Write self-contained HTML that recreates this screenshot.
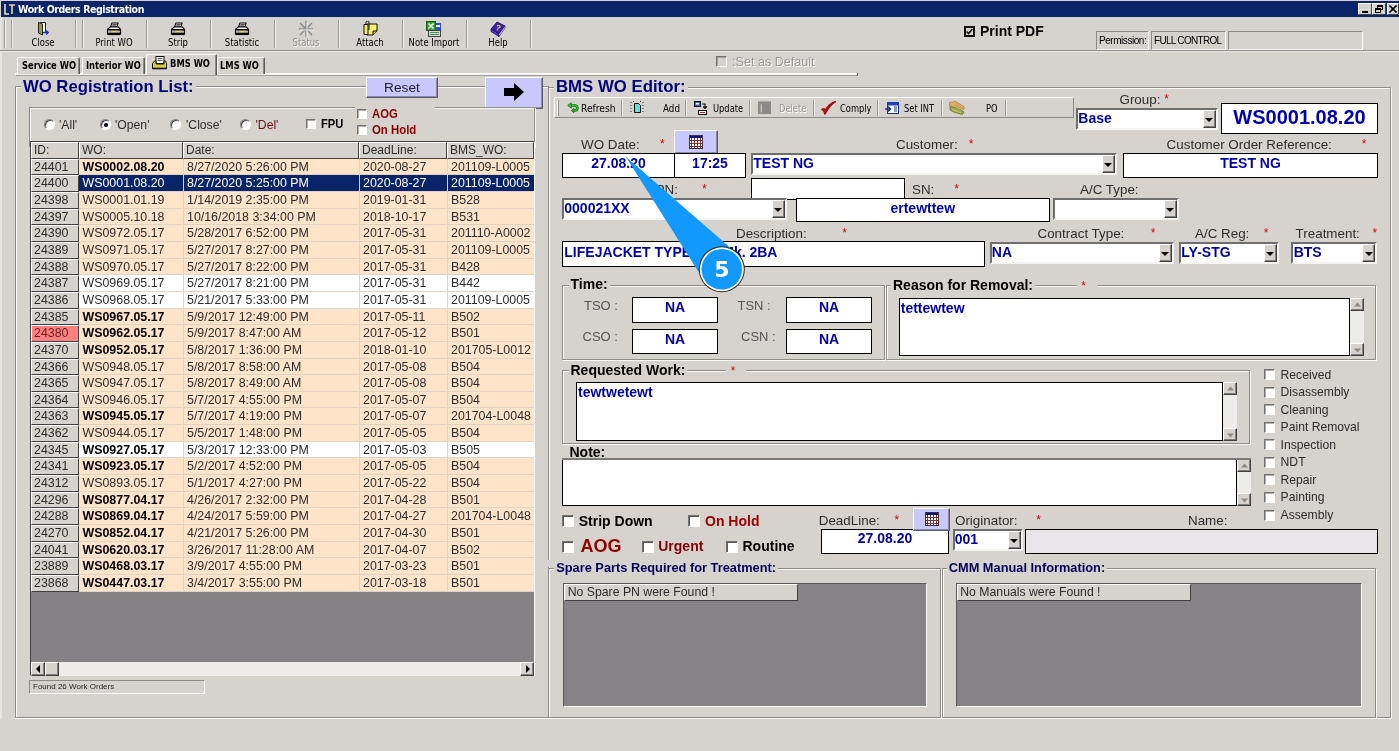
<!DOCTYPE html>
<html lang="en"><head><meta charset="utf-8"><title>Work Orders Registration</title>
<style>

html,body{margin:0;padding:0;}
body{width:1399px;height:751px;overflow:hidden;background:#d6d3ce;font-family:"Liberation Sans",sans-serif;}
#app{position:relative;width:1399px;height:751px;overflow:hidden;will-change:transform;}
#app div,#app span,#app svg{position:absolute;box-sizing:border-box;white-space:nowrap;}
.tah{font-family:"DejaVu Sans Condensed","DejaVu Sans","Liberation Sans",sans-serif;}
.lbl{font-size:13.4px;color:#2e2e2e;line-height:16px;height:16px;}
.star{color:#e00000;font-size:12px;line-height:12px;height:12px;}
.fld{background:#fff;border:1px solid #000;color:#0000a8;font-weight:bold;font-size:14px;line-height:16px;}
.fld.c{text-align:center;}
.cmb{background:#fff;border-top:2px solid #6e6e6e;border-left:2px solid #6e6e6e;border-bottom:2px solid #f4f4f2;border-right:2px solid #f4f4f2;color:#0000a8;font-weight:bold;font-size:14px;line-height:16px;}
.dd{background:#d6d3ce;border-top:1px solid #fff;border-left:1px solid #fff;border-right:1px solid #404040;border-bottom:1px solid #404040;box-shadow:inset -1px -1px 0 #808080;}
.dd i{position:absolute;left:50%;top:50%;margin:-1px 0 0 -4px;width:0;height:0;border-left:4px solid transparent;border-right:4px solid transparent;border-top:4px solid #000;}
.chk{width:11px;height:11px;background:#fff;border-top:1px solid #707070;border-left:1px solid #707070;border-bottom:1px solid #fff;border-right:1px solid #fff;box-shadow:inset 1px 1px 0 #b0aeaa;}
.grp{border:1px solid #8e8c88;box-shadow:1px 1px 0 #fbfaf8, inset 1px 1px 0 #fbfaf8;}
.gl{background:#d6d3ce;font-weight:bold;padding:0 2px;}
.sep{width:2px;border-left:1px solid #9c9a94;border-right:1px solid #f2f0ec;}
.tbl{font-size:11px;color:#000;text-align:center;line-height:13px;}
.lav{background:#c8c8ff;border-top:1px solid #fff;border-left:1px solid #fff;border-right:1px solid #5a5a6a;border-bottom:1px solid #5a5a6a;box-shadow:inset -1px -1px 0 #8a8aa0;}
.g{font-size:12.4px;line-height:16px;color:#2c2c2c;height:16.66px;}
.sb{background:#edecea;}
.sbb{background:#d6d3ce;border-top:1px solid #fff;border-left:1px solid #fff;border-right:1px solid #404040;border-bottom:1px solid #404040;box-shadow:inset -1px -1px 0 #808080;}
.ta{background:#fff;border:1px solid #000;}
.hdr{background:#d6d3ce;border-top:1px solid #fff;border-left:1px solid #fff;border-right:1px solid #404040;border-bottom:1px solid #404040;font-size:12px;line-height:14px;color:#2c2c2c;}

</style></head>
<body>
<div id="app">
<div style="left:1px;top:1px;width:1398px;height:16px;background:#0a246a;"></div>
<svg style="left:3px;top:2px" width="14" height="14" viewBox="0 0 14 14"><path d="M2 2v10h4" stroke="#e8e0c0" stroke-width="1.6" fill="none"/><path d="M6 3h6M9 3v9" stroke="#f0d890" stroke-width="1.6" fill="none"/></svg>
<div class="tah" style="left:18px;top:2px;height:14px;line-height:14px;font-size:10.5px;letter-spacing:-0.42px;font-weight:bold;color:#fff;">Work Orders Registration</div>
<div style="left:1358px;top:3px;width:14px;height:12px;background:#d6d3ce;border-top:1px solid #fff;border-left:1px solid #fff;border-right:1px solid #404040;border-bottom:1px solid #404040;"><div style="left:3px;top:7px;width:6px;height:2px;background:#000"></div></div>
<div style="left:1372px;top:3px;width:14px;height:12px;background:#d6d3ce;border-top:1px solid #fff;border-left:1px solid #fff;border-right:1px solid #404040;border-bottom:1px solid #404040;"><div style="left:4px;top:1px;width:6px;height:5px;border:1px solid #000;border-top:2px solid #000"></div><div style="left:2px;top:4px;width:6px;height:5px;border:1px solid #000;border-top:2px solid #000;background:#d6d3ce"></div></div>
<div style="left:1387px;top:3px;width:12px;height:12px;background:#d6d3ce;border-top:1px solid #fff;border-left:1px solid #fff;border-right:1px solid #404040;border-bottom:1px solid #404040;"><svg style="left:1px;top:1px" width="8" height="8" viewBox="0 0 8 8"><path d="M0.5 0.5L7.5 7.5M7.5 0.5L0.5 7.5" stroke="#000" stroke-width="1.6"/></svg></div>
<div style="left:0;top:17px;width:2px;height:734px;background:#e6e4e0"></div>
<div style="left:0;top:50px;width:1399px;height:1px;background:#8c8a86"></div>
<div style="left:0;top:51px;width:1399px;height:1px;background:#eceae6"></div>
<div class="sep" style="left:4px;top:20px;height:28px"></div>
<div class="sep" style="left:11px;top:20px;height:28px"></div>
<div class="sep" style="left:75px;top:20px;height:28px"></div>
<div class="sep" style="left:82px;top:20px;height:28px"></div>
<div class="sep" style="left:146px;top:20px;height:28px"></div>
<div class="sep" style="left:210px;top:20px;height:28px"></div>
<div class="sep" style="left:274px;top:20px;height:28px"></div>
<div class="sep" style="left:338px;top:20px;height:28px"></div>
<div class="sep" style="left:402px;top:20px;height:28px"></div>
<div class="sep" style="left:466px;top:20px;height:28px"></div>
<div class="sep" style="left:530px;top:20px;height:28px"></div>
<div style="left:35px;top:21px;width:16px;height:16px"><svg width="16" height="16" viewBox="0 0 16 16"><path d="M5.500 1.500h5v10h-5z" fill="#fff" stroke="#222" stroke-width="1"/><path d="M3.500 1.500l4 1.500v11l-4-2z" fill="#98a020" stroke="#222" stroke-width="1"/><path d="M8.500 11.500h4.500m-1.800-2l2 2-2 2" stroke="#2030c0" stroke-width="1.400" fill="none"/></svg></div>
<div class="tah tbl" style="left:11px;top:36px;width:64px;color:#000;transform:scaleX(.855)">Close</div>
<div style="left:106px;top:21px;width:16px;height:16px"><svg width="16" height="16" viewBox="-1 -1.500 16 16"><path d="M3.500 4.500l1.500-4h6l-1 4z" fill="#fff" stroke="#000" stroke-width="1.100"/><path d="M5.600 2h4M5.200 3.300h4" stroke="#333" stroke-width="0.900"/><path d="M0.500 7l2.500-2.500h8.500l2 2.500v4.500h-13z" fill="#fff" stroke="#000" stroke-width="1.200"/><path d="M0.500 7.300h13" stroke="#000" stroke-width="1.600"/><rect x="1" y="8.600" width="12" height="1.600" fill="#a8a8a8"/><rect x="5.500" y="8.400" width="4" height="1.800" fill="#e8e820"/><path d="M0.500 11.400h13" stroke="#000" stroke-width="2.400"/></svg></div>
<div class="tah tbl" style="left:82px;top:36px;width:64px;color:#000;transform:scaleX(.855)">Print WO</div>
<div style="left:170px;top:21px;width:16px;height:16px"><svg width="16" height="16" viewBox="-1 -1.500 16 16"><path d="M3.500 4.500l1.500-4h6l-1 4z" fill="#fff" stroke="#000" stroke-width="1.100"/><path d="M5.600 2h4M5.200 3.300h4" stroke="#333" stroke-width="0.900"/><path d="M0.500 7l2.500-2.500h8.500l2 2.500v4.500h-13z" fill="#fff" stroke="#000" stroke-width="1.200"/><path d="M0.500 7.300h13" stroke="#000" stroke-width="1.600"/><rect x="1" y="8.600" width="12" height="1.600" fill="#a8a8a8"/><rect x="5.500" y="8.400" width="4" height="1.800" fill="#e8e820"/><path d="M0.500 11.400h13" stroke="#000" stroke-width="2.400"/></svg></div>
<div class="tah tbl" style="left:146px;top:36px;width:64px;color:#000;transform:scaleX(.855)">Strip</div>
<div style="left:234px;top:21px;width:16px;height:16px"><svg width="16" height="16" viewBox="-1 -1.500 16 16"><path d="M3.500 4.500l1.500-4h6l-1 4z" fill="#fff" stroke="#000" stroke-width="1.100"/><path d="M5.600 2h4M5.200 3.300h4" stroke="#333" stroke-width="0.900"/><path d="M0.500 7l2.500-2.500h8.500l2 2.500v4.500h-13z" fill="#fff" stroke="#000" stroke-width="1.200"/><path d="M0.500 7.300h13" stroke="#000" stroke-width="1.600"/><rect x="1" y="8.600" width="12" height="1.600" fill="#a8a8a8"/><rect x="5.500" y="8.400" width="4" height="1.800" fill="#e8e820"/><path d="M0.500 11.400h13" stroke="#000" stroke-width="2.400"/></svg></div>
<div class="tah tbl" style="left:210px;top:36px;width:64px;color:#000;transform:scaleX(.855)">Statistic</div>
<div style="left:298px;top:21px;width:16px;height:16px"><svg width="16" height="16" viewBox="0 0 16 16"><path d="M8 0v16M1 8h14M2 2l12 12M14 2L2 14" stroke="#8a8a8a" stroke-width="1.5"/><path d="M9 1v16M2 9h14" stroke="#fff" stroke-width="0.8"/></svg></div>
<div class="tah tbl" style="left:274px;top:36px;width:64px;color:#8c8a86;text-shadow:1px 1px 0 #fff;transform:scaleX(.855)">Status</div>
<div style="left:362px;top:21px;width:16px;height:16px"><svg width="16" height="16" viewBox="0 0 16 16"><path d="M5 3h10v7l-4 4H5z" fill="#f4f070" stroke="#111" stroke-width="1"/><path d="M2 3.5h4v10H2z" fill="#f4f070" stroke="#111" stroke-width="1"/><path d="M4 3V1.5a1.5 1.5 0 0 1 3 0V9" fill="none" stroke="#111" stroke-width="1"/><path d="M11 14v-4h4" fill="#c8c040" stroke="#111" stroke-width="1"/></svg></div>
<div class="tah tbl" style="left:338px;top:36px;width:64px;color:#000;transform:scaleX(.855)">Attach</div>
<div style="left:426px;top:21px;width:16px;height:16px"><svg width="16" height="16" viewBox="0 0 16 16"><rect x="0.5" y="0.5" width="9" height="9" fill="#28a028" stroke="#106010"/><path d="M2.5 2.5l5 5M7.5 2.5l-5 5" stroke="#fff" stroke-width="1.6"/><rect x="9" y="2" width="6" height="7" fill="#3048d0"/><rect x="10" y="4" width="4" height="2" fill="#fff"/><rect x="2.5" y="9.5" width="12" height="6" fill="#d8d8d8" stroke="#444"/><path d="M4 11.5h9M4 13.5h9" stroke="#509050" stroke-width="1"/></svg></div>
<div class="tah tbl" style="left:402px;top:36px;width:64px;color:#000;transform:scaleX(.855)">Note Import</div>
<div style="left:490px;top:21px;width:16px;height:16px"><svg width="16" height="16" viewBox="0 0 16 16"><path d="M1 8l6-7 8 4-6 8z" fill="#3a1fa8" stroke="#1a0a60" stroke-width="0.8"/><path d="M1 8l8 5v2.5L1 10.5z" fill="#5a3ad0" stroke="#1a0a60" stroke-width="0.8"/><path d="M9 13l6-8v2l-6 8.5z" fill="#e8e8f0" stroke="#1a0a60" stroke-width="0.6"/><text x="5.6" y="9.4" font-family="Liberation Sans,sans-serif" font-weight="bold" font-size="8" fill="#f0e040" transform="rotate(20 8 7)">?</text></svg></div>
<div class="tah tbl" style="left:466px;top:36px;width:64px;color:#000;transform:scaleX(.855)">Help</div>
<div style="left:964px;top:26px;width:11px;height:11px;border:2px solid #111;background:#d6d3ce"></div>
<svg style="left:964px;top:26px" width="11" height="11" viewBox="0 0 11 11"><path d="M2.6 5.4l2 2.2 3.8-4.6" stroke="#111" stroke-width="1.5" fill="none"/></svg>
<div style="left:980px;top:23px;font-size:14px;font-weight:bold;line-height:16px;color:#000">Print PDF</div>
<div style="left:1096px;top:31px;width:53px;height:19px;border-top:1px solid #8c8a86;border-left:1px solid #8c8a86;border-right:1px solid #fff;border-bottom:1px solid #fff;font-size:10px;letter-spacing:-0.45px;line-height:17px;padding-left:2px;color:#000">Permission:</div>
<div style="left:1151px;top:31px;width:75px;height:19px;border-top:1px solid #8c8a86;border-left:1px solid #8c8a86;border-right:1px solid #fff;border-bottom:1px solid #fff;font-size:10px;letter-spacing:-0.45px;line-height:17px;padding-left:2px;color:#000"><span style="position:static;letter-spacing:-0.7px">FULL CONTROL</span></div>
<div style="left:1228px;top:31px;width:135px;height:19px;border-top:1px solid #8c8a86;border-left:1px solid #8c8a86;border-right:1px solid #fff;border-bottom:1px solid #fff;font-size:10px;letter-spacing:-0.45px;line-height:17px;padding-left:2px;color:#000"></div>
<div style="left:15px;top:73px;width:843px;height:1px;background:#fff"></div>
<div style="left:15px;top:74px;width:843px;height:1px;background:#f0eeea"></div><div style="left:16px;top:75px;width:842px;height:1px;background:#a4a29c"></div>
<div style="left:857px;top:73px;width:1px;height:3px;background:#6a6a6a"></div>
<div style="left:17px;top:57px;width:63px;height:17px;background:#d6d3ce;border-top:1px solid #fff;border-left:1px solid #fff;border-right:1px solid #5a5a5a;box-shadow:inset -1px 0 0 #8c8a86;border-radius:2px 2px 0 0"></div>
<div style="left:82px;top:57px;width:63px;height:17px;background:#d6d3ce;border-top:1px solid #fff;border-left:1px solid #fff;border-right:1px solid #5a5a5a;box-shadow:inset -1px 0 0 #8c8a86;border-radius:2px 2px 0 0"></div>
<div style="left:217px;top:57px;width:48px;height:17px;background:#d6d3ce;border-top:1px solid #fff;border-left:1px solid #fff;border-right:1px solid #5a5a5a;box-shadow:inset -1px 0 0 #8c8a86;border-radius:2px 2px 0 0"></div>
<div style="left:146px;top:54px;width:71px;height:21px;background:#d6d3ce;border-top:1px solid #fff;border-left:1px solid #fff;border-right:1px solid #5a5a5a;box-shadow:inset -1px 0 0 #8c8a86;border-radius:2px 2px 0 0"></div>
<div class="tah" style="left:21.5px;top:59px;font-size:10px;font-weight:bold;line-height:13px;color:#000;transform-origin:0 50%;transform:scaleX(0.93)">Service WO</div>
<div class="tah" style="left:86px;top:59px;font-size:10px;font-weight:bold;line-height:13px;color:#000;transform-origin:0 50%;transform:scaleX(0.93)">Interior WO</div>
<div class="tah" style="left:170px;top:57px;font-size:10px;font-weight:bold;line-height:13px;color:#000;transform-origin:0 50%;transform:scaleX(0.93)">BMS WO</div>
<div class="tah" style="left:220px;top:59px;font-size:10px;font-weight:bold;line-height:13px;color:#000;transform-origin:0 50%;transform:scaleX(0.93)">LMS WO</div>
<svg style="left:152px;top:56px" width="15" height="14" viewBox="0 0 15 14"><rect x="4" y="0.5" width="8" height="7" fill="#fff" stroke="#111"/><path d="M5.5 2.5h5M5.5 4.5h5" stroke="#555" stroke-width="1"/><path d="M0.5 7.5l2-2.5h1.5v3h8v-3h1.5l1 2.5v5h-14z" fill="#d8d040" stroke="#111" stroke-width="1"/><path d="M0.5 12.5h14" stroke="#111" stroke-width="1.6"/></svg>
<div style="left:716px;top:56px;width:11px;height:11px;background:#d6d3ce;border-top:1px solid #707070;border-left:1px solid #707070;border-bottom:1px solid #fff;border-right:1px solid #fff;box-shadow:inset 1px 1px 0 #a0a09c"></div>
<div style="left:732px;top:54px;font-size:12.6px;line-height:16px;color:#9a9894;text-shadow:1px 1px 0 #fff">:Set as Default</div>
<div class="grp" style="left:15px;top:86px;width:534px;height:632px;border-right:none;box-shadow:0 1px 0 #fff, inset 1px 1px 0 #fff"></div>
<div class="gl" style="left:21px;top:76px;height:22px;line-height:22px;font-size:16.7px;color:#000080">WO Registration List:</div>
<div class="lav" style="left:366px;top:77px;width:72px;height:21px;text-align:center;font-size:13.7px;line-height:19px;color:#222">Reset</div>
<div class="lav" style="left:485px;top:77px;width:58px;height:32px"></div>
<svg style="left:503px;top:82px" width="22" height="20" viewBox="0 0 22 20"><path d="M1 6h10V1l10 9-10 9v-5H1z" fill="#000"/></svg>
<div class="grp" style="left:29px;top:107px;width:506px;height:40px"></div>
<div style="left:43.5px;top:119px;width:11px;height:11px;border-radius:6px;background:#fff;border:1px solid #808080;border-right-color:#fff;border-bottom-color:#fff;box-shadow:inset 1px 1px 0 #404040"></div>
<div style="left:59px;top:116.5px;font-size:12.2px;line-height:16px;color:#2e2e2e">'All'</div>
<div style="left:99.5px;top:119px;width:11px;height:11px;border-radius:6px;background:#fff;border:1px solid #808080;border-right-color:#fff;border-bottom-color:#fff;box-shadow:inset 1px 1px 0 #404040"><div style="left:3px;top:3px;width:4px;height:4px;border-radius:2px;background:#000"></div></div>
<div style="left:115px;top:116.5px;font-size:12.2px;line-height:16px;color:#2e2e2e">'Open'</div>
<div style="left:169.5px;top:119px;width:11px;height:11px;border-radius:6px;background:#fff;border:1px solid #808080;border-right-color:#fff;border-bottom-color:#fff;box-shadow:inset 1px 1px 0 #404040"></div>
<div style="left:186px;top:116.5px;font-size:12.2px;line-height:16px;color:#2e2e2e">'Close'</div>
<div style="left:239.5px;top:119px;width:11px;height:11px;border-radius:6px;background:#fff;border:1px solid #808080;border-right-color:#fff;border-bottom-color:#fff;box-shadow:inset 1px 1px 0 #404040"></div>
<div style="left:255.5px;top:116.5px;font-size:12.2px;line-height:16px;color:#6a1010">'Del'</div>
<div class="chk" style="left:306px;top:118.5px;width:10px;height:10px"></div>
<div style="left:321px;top:116px;font-size:12px;font-weight:bold;line-height:16px;color:#000;transform-origin:0 50%;transform:scaleX(.93)">FPU</div>
<div style="left:355px;top:104px;width:80px;height:32px;background:#d6d3ce"></div>
<div class="chk" style="left:357px;top:109px;width:10px;height:10px"></div>
<div style="left:371.5px;top:106px;font-size:12px;font-weight:bold;line-height:16px;color:#8a0000;transform-origin:0 50%;transform:scaleX(.94)">AOG</div>
<div class="chk" style="left:357px;top:125px;width:10px;height:10px"></div>
<div style="left:372px;top:122px;font-size:12px;font-weight:bold;line-height:16px;color:#8a0000;transform-origin:0 50%;transform:scaleX(.95)">On Hold</div>
<div style="left:30px;top:141px;width:505px;height:535px;background:#848284;border-top:1px solid #404040;border-left:1px solid #404040;border-right:1px solid #fff;border-bottom:1px solid #fff"></div>
<div style="left:31px;top:142px;width:48px;height:17px;background:#d6d3ce;border-top:1px solid #fff;border-left:1px solid #fff;border-right:1px solid #404040;border-bottom:1px solid #404040;font-size:12px;line-height:15px;padding-left:2px;color:#2c2c2c">ID:</div>
<div style="left:79px;top:142px;width:104px;height:17px;background:#d6d3ce;border-top:1px solid #fff;border-left:1px solid #fff;border-right:1px solid #404040;border-bottom:1px solid #404040;font-size:12px;line-height:15px;padding-left:2px;color:#2c2c2c">WO:</div>
<div style="left:183px;top:142px;width:176px;height:17px;background:#d6d3ce;border-top:1px solid #fff;border-left:1px solid #fff;border-right:1px solid #404040;border-bottom:1px solid #404040;font-size:12px;line-height:15px;padding-left:2px;color:#2c2c2c">Date:</div>
<div style="left:359px;top:142px;width:88px;height:17px;background:#d6d3ce;border-top:1px solid #fff;border-left:1px solid #fff;border-right:1px solid #404040;border-bottom:1px solid #404040;font-size:12px;line-height:15px;padding-left:2px;color:#2c2c2c">DeadLine:</div>
<div style="left:447px;top:142px;width:87px;height:17px;background:#d6d3ce;border-top:1px solid #fff;border-left:1px solid #fff;border-right:1px solid #404040;border-bottom:1px solid #404040;font-size:12px;line-height:15px;padding-left:2px;color:#2c2c2c">BMS_WO:</div>
<div class="g" style="left:31px;top:159px;height:16px;width:48px;background:#d6d3ce;color:#2c2c2c;border-right:1px solid #404040;border-bottom:1px solid #404040;border-top:1px solid #fff;border-left:1px solid #fff;padding-left:2px;line-height:15px">24401</div>
<div class="g" style="left:79px;top:159px;height:16px;width:455px;background:#ffe4ca;border-bottom:1px solid #e0d2c4"></div>
<div class="g" style="left:82.5px;top:159px;color:#2c2c2c;font-weight:bold;color:#000;">WS0002.08.20</div>
<div class="g" style="left:187px;top:159px;color:#2c2c2c">8/27/2020 5:26:00 PM</div>
<div class="g" style="left:363px;top:159px;color:#2c2c2c">2020-08-27</div>
<div class="g" style="left:451px;top:159px;color:#2c2c2c">201109-L0005</div>
<div class="g" style="left:31px;top:175px;height:17px;width:48px;background:#d6d3ce;color:#2c2c2c;border-right:1px solid #404040;border-bottom:1px solid #404040;border-top:1px solid #fff;border-left:1px solid #fff;padding-left:2px;line-height:15px">24400</div>
<div class="g" style="left:79px;top:175px;height:17px;width:455px;background:#0a246a;border-bottom:1px solid #e0d2c4"></div>
<div class="g" style="left:82.5px;top:175px;color:#fff;">WS0001.08.20</div>
<div class="g" style="left:187px;top:175px;color:#fff">8/27/2020 5:25:00 PM</div>
<div class="g" style="left:363px;top:175px;color:#fff">2020-08-27</div>
<div class="g" style="left:451px;top:175px;color:#fff">201109-L0005</div>
<div class="g" style="left:31px;top:192px;height:17px;width:48px;background:#d6d3ce;color:#2c2c2c;border-right:1px solid #404040;border-bottom:1px solid #404040;border-top:1px solid #fff;border-left:1px solid #fff;padding-left:2px;line-height:15px">24398</div>
<div class="g" style="left:79px;top:192px;height:17px;width:455px;background:#ffe4ca;border-bottom:1px solid #e0d2c4"></div>
<div class="g" style="left:82.5px;top:192px;color:#2c2c2c;">WS0001.01.19</div>
<div class="g" style="left:187px;top:192px;color:#2c2c2c">1/14/2019 2:35:00 PM</div>
<div class="g" style="left:363px;top:192px;color:#2c2c2c">2019-01-31</div>
<div class="g" style="left:451px;top:192px;color:#2c2c2c">B528</div>
<div class="g" style="left:31px;top:209px;height:16px;width:48px;background:#d6d3ce;color:#2c2c2c;border-right:1px solid #404040;border-bottom:1px solid #404040;border-top:1px solid #fff;border-left:1px solid #fff;padding-left:2px;line-height:15px">24397</div>
<div class="g" style="left:79px;top:209px;height:16px;width:455px;background:#ffe4ca;border-bottom:1px solid #e0d2c4"></div>
<div class="g" style="left:82.5px;top:209px;color:#2c2c2c;">WS0005.10.18</div>
<div class="g" style="left:187px;top:209px;color:#2c2c2c">10/16/2018 3:34:00 PM</div>
<div class="g" style="left:363px;top:209px;color:#2c2c2c">2018-10-17</div>
<div class="g" style="left:451px;top:209px;color:#2c2c2c">B531</div>
<div class="g" style="left:31px;top:225px;height:17px;width:48px;background:#d6d3ce;color:#2c2c2c;border-right:1px solid #404040;border-bottom:1px solid #404040;border-top:1px solid #fff;border-left:1px solid #fff;padding-left:2px;line-height:15px">24390</div>
<div class="g" style="left:79px;top:225px;height:17px;width:455px;background:#ffe4ca;border-bottom:1px solid #e0d2c4"></div>
<div class="g" style="left:82.5px;top:225px;color:#2c2c2c;">WS0972.05.17</div>
<div class="g" style="left:187px;top:225px;color:#2c2c2c">5/28/2017 6:52:00 PM</div>
<div class="g" style="left:363px;top:225px;color:#2c2c2c">2017-05-31</div>
<div class="g" style="left:451px;top:225px;color:#2c2c2c">201110-A0002</div>
<div class="g" style="left:31px;top:242px;height:17px;width:48px;background:#d6d3ce;color:#2c2c2c;border-right:1px solid #404040;border-bottom:1px solid #404040;border-top:1px solid #fff;border-left:1px solid #fff;padding-left:2px;line-height:15px">24389</div>
<div class="g" style="left:79px;top:242px;height:17px;width:455px;background:#ffe4ca;border-bottom:1px solid #e0d2c4"></div>
<div class="g" style="left:82.5px;top:242px;color:#2c2c2c;">WS0971.05.17</div>
<div class="g" style="left:187px;top:242px;color:#2c2c2c">5/27/2017 8:27:00 PM</div>
<div class="g" style="left:363px;top:242px;color:#2c2c2c">2017-05-31</div>
<div class="g" style="left:451px;top:242px;color:#2c2c2c">201109-L0005</div>
<div class="g" style="left:31px;top:259px;height:16px;width:48px;background:#d6d3ce;color:#2c2c2c;border-right:1px solid #404040;border-bottom:1px solid #404040;border-top:1px solid #fff;border-left:1px solid #fff;padding-left:2px;line-height:15px">24388</div>
<div class="g" style="left:79px;top:259px;height:16px;width:455px;background:#ffe4ca;border-bottom:1px solid #e0d2c4"></div>
<div class="g" style="left:82.5px;top:259px;color:#2c2c2c;">WS0970.05.17</div>
<div class="g" style="left:187px;top:259px;color:#2c2c2c">5/27/2017 8:22:00 PM</div>
<div class="g" style="left:363px;top:259px;color:#2c2c2c">2017-05-31</div>
<div class="g" style="left:451px;top:259px;color:#2c2c2c">B428</div>
<div class="g" style="left:31px;top:275px;height:17px;width:48px;background:#d6d3ce;color:#2c2c2c;border-right:1px solid #404040;border-bottom:1px solid #404040;border-top:1px solid #fff;border-left:1px solid #fff;padding-left:2px;line-height:15px">24387</div>
<div class="g" style="left:79px;top:275px;height:17px;width:455px;background:#ffffff;border-bottom:1px solid #e0d2c4"></div>
<div class="g" style="left:82.5px;top:275px;color:#2c2c2c;">WS0969.05.17</div>
<div class="g" style="left:187px;top:275px;color:#2c2c2c">5/27/2017 8:21:00 PM</div>
<div class="g" style="left:363px;top:275px;color:#2c2c2c">2017-05-31</div>
<div class="g" style="left:451px;top:275px;color:#2c2c2c">B442</div>
<div class="g" style="left:31px;top:292px;height:17px;width:48px;background:#d6d3ce;color:#2c2c2c;border-right:1px solid #404040;border-bottom:1px solid #404040;border-top:1px solid #fff;border-left:1px solid #fff;padding-left:2px;line-height:15px">24386</div>
<div class="g" style="left:79px;top:292px;height:17px;width:455px;background:#ffffff;border-bottom:1px solid #e0d2c4"></div>
<div class="g" style="left:82.5px;top:292px;color:#2c2c2c;">WS0968.05.17</div>
<div class="g" style="left:187px;top:292px;color:#2c2c2c">5/21/2017 5:33:00 PM</div>
<div class="g" style="left:363px;top:292px;color:#2c2c2c">2017-05-31</div>
<div class="g" style="left:451px;top:292px;color:#2c2c2c">201109-L0005</div>
<div class="g" style="left:31px;top:309px;height:16px;width:48px;background:#d6d3ce;color:#2c2c2c;border-right:1px solid #404040;border-bottom:1px solid #404040;border-top:1px solid #fff;border-left:1px solid #fff;padding-left:2px;line-height:15px">24385</div>
<div class="g" style="left:79px;top:309px;height:16px;width:455px;background:#ffe4ca;border-bottom:1px solid #e0d2c4"></div>
<div class="g" style="left:82.5px;top:309px;color:#2c2c2c;font-weight:bold;color:#000;">WS0967.05.17</div>
<div class="g" style="left:187px;top:309px;color:#2c2c2c">5/9/2017 12:49:00 PM</div>
<div class="g" style="left:363px;top:309px;color:#2c2c2c">2017-05-11</div>
<div class="g" style="left:451px;top:309px;color:#2c2c2c">B502</div>
<div class="g" style="left:31px;top:325px;height:17px;width:48px;background:#ff8080;color:#702020;border-right:1px solid #404040;border-bottom:1px solid #404040;border-top:1px solid #fff;border-left:1px solid #fff;padding-left:2px;line-height:15px">24380</div>
<div class="g" style="left:79px;top:325px;height:17px;width:455px;background:#ffe4ca;border-bottom:1px solid #e0d2c4"></div>
<div class="g" style="left:82.5px;top:325px;color:#2c2c2c;font-weight:bold;color:#000;">WS0962.05.17</div>
<div class="g" style="left:187px;top:325px;color:#2c2c2c">5/9/2017 8:47:00 AM</div>
<div class="g" style="left:363px;top:325px;color:#2c2c2c">2017-05-12</div>
<div class="g" style="left:451px;top:325px;color:#2c2c2c">B501</div>
<div class="g" style="left:31px;top:342px;height:17px;width:48px;background:#d6d3ce;color:#2c2c2c;border-right:1px solid #404040;border-bottom:1px solid #404040;border-top:1px solid #fff;border-left:1px solid #fff;padding-left:2px;line-height:15px">24370</div>
<div class="g" style="left:79px;top:342px;height:17px;width:455px;background:#ffe4ca;border-bottom:1px solid #e0d2c4"></div>
<div class="g" style="left:82.5px;top:342px;color:#2c2c2c;font-weight:bold;color:#000;">WS0952.05.17</div>
<div class="g" style="left:187px;top:342px;color:#2c2c2c">5/8/2017 1:36:00 PM</div>
<div class="g" style="left:363px;top:342px;color:#2c2c2c">2018-01-10</div>
<div class="g" style="left:451px;top:342px;color:#2c2c2c">201705-L0012</div>
<div class="g" style="left:31px;top:359px;height:16px;width:48px;background:#d6d3ce;color:#2c2c2c;border-right:1px solid #404040;border-bottom:1px solid #404040;border-top:1px solid #fff;border-left:1px solid #fff;padding-left:2px;line-height:15px">24366</div>
<div class="g" style="left:79px;top:359px;height:16px;width:455px;background:#ffe4ca;border-bottom:1px solid #e0d2c4"></div>
<div class="g" style="left:82.5px;top:359px;color:#2c2c2c;">WS0948.05.17</div>
<div class="g" style="left:187px;top:359px;color:#2c2c2c">5/8/2017 8:58:00 AM</div>
<div class="g" style="left:363px;top:359px;color:#2c2c2c">2017-05-08</div>
<div class="g" style="left:451px;top:359px;color:#2c2c2c">B504</div>
<div class="g" style="left:31px;top:375px;height:17px;width:48px;background:#d6d3ce;color:#2c2c2c;border-right:1px solid #404040;border-bottom:1px solid #404040;border-top:1px solid #fff;border-left:1px solid #fff;padding-left:2px;line-height:15px">24365</div>
<div class="g" style="left:79px;top:375px;height:17px;width:455px;background:#ffe4ca;border-bottom:1px solid #e0d2c4"></div>
<div class="g" style="left:82.5px;top:375px;color:#2c2c2c;">WS0947.05.17</div>
<div class="g" style="left:187px;top:375px;color:#2c2c2c">5/8/2017 8:49:00 AM</div>
<div class="g" style="left:363px;top:375px;color:#2c2c2c">2017-05-08</div>
<div class="g" style="left:451px;top:375px;color:#2c2c2c">B504</div>
<div class="g" style="left:31px;top:392px;height:16px;width:48px;background:#d6d3ce;color:#2c2c2c;border-right:1px solid #404040;border-bottom:1px solid #404040;border-top:1px solid #fff;border-left:1px solid #fff;padding-left:2px;line-height:15px">24364</div>
<div class="g" style="left:79px;top:392px;height:16px;width:455px;background:#ffe4ca;border-bottom:1px solid #e0d2c4"></div>
<div class="g" style="left:82.5px;top:392px;color:#2c2c2c;">WS0946.05.17</div>
<div class="g" style="left:187px;top:392px;color:#2c2c2c">5/7/2017 4:55:00 PM</div>
<div class="g" style="left:363px;top:392px;color:#2c2c2c">2017-05-07</div>
<div class="g" style="left:451px;top:392px;color:#2c2c2c">B504</div>
<div class="g" style="left:31px;top:408px;height:17px;width:48px;background:#d6d3ce;color:#2c2c2c;border-right:1px solid #404040;border-bottom:1px solid #404040;border-top:1px solid #fff;border-left:1px solid #fff;padding-left:2px;line-height:15px">24363</div>
<div class="g" style="left:79px;top:408px;height:17px;width:455px;background:#ffe4ca;border-bottom:1px solid #e0d2c4"></div>
<div class="g" style="left:82.5px;top:408px;color:#2c2c2c;font-weight:bold;color:#000;">WS0945.05.17</div>
<div class="g" style="left:187px;top:408px;color:#2c2c2c">5/7/2017 4:19:00 PM</div>
<div class="g" style="left:363px;top:408px;color:#2c2c2c">2017-05-07</div>
<div class="g" style="left:451px;top:408px;color:#2c2c2c">201704-L0048</div>
<div class="g" style="left:31px;top:425px;height:17px;width:48px;background:#d6d3ce;color:#2c2c2c;border-right:1px solid #404040;border-bottom:1px solid #404040;border-top:1px solid #fff;border-left:1px solid #fff;padding-left:2px;line-height:15px">24362</div>
<div class="g" style="left:79px;top:425px;height:17px;width:455px;background:#ffe4ca;border-bottom:1px solid #e0d2c4"></div>
<div class="g" style="left:82.5px;top:425px;color:#2c2c2c;">WS0944.05.17</div>
<div class="g" style="left:187px;top:425px;color:#2c2c2c">5/5/2017 1:48:00 PM</div>
<div class="g" style="left:363px;top:425px;color:#2c2c2c">2017-05-05</div>
<div class="g" style="left:451px;top:425px;color:#2c2c2c">B504</div>
<div class="g" style="left:31px;top:442px;height:16px;width:48px;background:#d6d3ce;color:#2c2c2c;border-right:1px solid #404040;border-bottom:1px solid #404040;border-top:1px solid #fff;border-left:1px solid #fff;padding-left:2px;line-height:15px">24345</div>
<div class="g" style="left:79px;top:442px;height:16px;width:455px;background:#ffffff;border-bottom:1px solid #e0d2c4"></div>
<div class="g" style="left:82.5px;top:442px;color:#2c2c2c;font-weight:bold;color:#000;">WS0927.05.17</div>
<div class="g" style="left:187px;top:442px;color:#2c2c2c">5/3/2017 12:33:00 PM</div>
<div class="g" style="left:363px;top:442px;color:#2c2c2c">2017-05-03</div>
<div class="g" style="left:451px;top:442px;color:#2c2c2c">B505</div>
<div class="g" style="left:31px;top:458px;height:17px;width:48px;background:#d6d3ce;color:#2c2c2c;border-right:1px solid #404040;border-bottom:1px solid #404040;border-top:1px solid #fff;border-left:1px solid #fff;padding-left:2px;line-height:15px">24341</div>
<div class="g" style="left:79px;top:458px;height:17px;width:455px;background:#ffe4ca;border-bottom:1px solid #e0d2c4"></div>
<div class="g" style="left:82.5px;top:458px;color:#2c2c2c;font-weight:bold;color:#000;">WS0923.05.17</div>
<div class="g" style="left:187px;top:458px;color:#2c2c2c">5/2/2017 4:52:00 PM</div>
<div class="g" style="left:363px;top:458px;color:#2c2c2c">2017-05-05</div>
<div class="g" style="left:451px;top:458px;color:#2c2c2c">B504</div>
<div class="g" style="left:31px;top:475px;height:17px;width:48px;background:#d6d3ce;color:#2c2c2c;border-right:1px solid #404040;border-bottom:1px solid #404040;border-top:1px solid #fff;border-left:1px solid #fff;padding-left:2px;line-height:15px">24312</div>
<div class="g" style="left:79px;top:475px;height:17px;width:455px;background:#ffe4ca;border-bottom:1px solid #e0d2c4"></div>
<div class="g" style="left:82.5px;top:475px;color:#2c2c2c;">WS0893.05.17</div>
<div class="g" style="left:187px;top:475px;color:#2c2c2c">5/1/2017 4:27:00 PM</div>
<div class="g" style="left:363px;top:475px;color:#2c2c2c">2017-05-22</div>
<div class="g" style="left:451px;top:475px;color:#2c2c2c">B504</div>
<div class="g" style="left:31px;top:492px;height:16px;width:48px;background:#d6d3ce;color:#2c2c2c;border-right:1px solid #404040;border-bottom:1px solid #404040;border-top:1px solid #fff;border-left:1px solid #fff;padding-left:2px;line-height:15px">24296</div>
<div class="g" style="left:79px;top:492px;height:16px;width:455px;background:#ffe4ca;border-bottom:1px solid #e0d2c4"></div>
<div class="g" style="left:82.5px;top:492px;color:#2c2c2c;font-weight:bold;color:#000;">WS0877.04.17</div>
<div class="g" style="left:187px;top:492px;color:#2c2c2c">4/26/2017 2:32:00 PM</div>
<div class="g" style="left:363px;top:492px;color:#2c2c2c">2017-04-28</div>
<div class="g" style="left:451px;top:492px;color:#2c2c2c">B501</div>
<div class="g" style="left:31px;top:508px;height:17px;width:48px;background:#d6d3ce;color:#2c2c2c;border-right:1px solid #404040;border-bottom:1px solid #404040;border-top:1px solid #fff;border-left:1px solid #fff;padding-left:2px;line-height:15px">24288</div>
<div class="g" style="left:79px;top:508px;height:17px;width:455px;background:#ffe4ca;border-bottom:1px solid #e0d2c4"></div>
<div class="g" style="left:82.5px;top:508px;color:#2c2c2c;font-weight:bold;color:#000;">WS0869.04.17</div>
<div class="g" style="left:187px;top:508px;color:#2c2c2c">4/24/2017 5:59:00 PM</div>
<div class="g" style="left:363px;top:508px;color:#2c2c2c">2017-04-27</div>
<div class="g" style="left:451px;top:508px;color:#2c2c2c">201704-L0048</div>
<div class="g" style="left:31px;top:525px;height:17px;width:48px;background:#d6d3ce;color:#2c2c2c;border-right:1px solid #404040;border-bottom:1px solid #404040;border-top:1px solid #fff;border-left:1px solid #fff;padding-left:2px;line-height:15px">24270</div>
<div class="g" style="left:79px;top:525px;height:17px;width:455px;background:#ffe4ca;border-bottom:1px solid #e0d2c4"></div>
<div class="g" style="left:82.5px;top:525px;color:#2c2c2c;font-weight:bold;color:#000;">WS0852.04.17</div>
<div class="g" style="left:187px;top:525px;color:#2c2c2c">4/21/2017 5:26:00 PM</div>
<div class="g" style="left:363px;top:525px;color:#2c2c2c">2017-04-30</div>
<div class="g" style="left:451px;top:525px;color:#2c2c2c">B501</div>
<div class="g" style="left:31px;top:542px;height:16px;width:48px;background:#d6d3ce;color:#2c2c2c;border-right:1px solid #404040;border-bottom:1px solid #404040;border-top:1px solid #fff;border-left:1px solid #fff;padding-left:2px;line-height:15px">24041</div>
<div class="g" style="left:79px;top:542px;height:16px;width:455px;background:#ffe4ca;border-bottom:1px solid #e0d2c4"></div>
<div class="g" style="left:82.5px;top:542px;color:#2c2c2c;font-weight:bold;color:#000;">WS0620.03.17</div>
<div class="g" style="left:187px;top:542px;color:#2c2c2c">3/26/2017 11:28:00 AM</div>
<div class="g" style="left:363px;top:542px;color:#2c2c2c">2017-04-07</div>
<div class="g" style="left:451px;top:542px;color:#2c2c2c">B502</div>
<div class="g" style="left:31px;top:558px;height:17px;width:48px;background:#d6d3ce;color:#2c2c2c;border-right:1px solid #404040;border-bottom:1px solid #404040;border-top:1px solid #fff;border-left:1px solid #fff;padding-left:2px;line-height:15px">23889</div>
<div class="g" style="left:79px;top:558px;height:17px;width:455px;background:#ffe4ca;border-bottom:1px solid #e0d2c4"></div>
<div class="g" style="left:82.5px;top:558px;color:#2c2c2c;font-weight:bold;color:#000;">WS0468.03.17</div>
<div class="g" style="left:187px;top:558px;color:#2c2c2c">3/9/2017 4:55:00 PM</div>
<div class="g" style="left:363px;top:558px;color:#2c2c2c">2017-03-23</div>
<div class="g" style="left:451px;top:558px;color:#2c2c2c">B501</div>
<div class="g" style="left:31px;top:575px;height:17px;width:48px;background:#d6d3ce;color:#2c2c2c;border-right:1px solid #404040;border-bottom:1px solid #404040;border-top:1px solid #fff;border-left:1px solid #fff;padding-left:2px;line-height:15px">23868</div>
<div class="g" style="left:79px;top:575px;height:17px;width:455px;background:#ffe4ca;border-bottom:1px solid #e0d2c4"></div>
<div class="g" style="left:82.5px;top:575px;color:#2c2c2c;font-weight:bold;color:#000;">WS0447.03.17</div>
<div class="g" style="left:187px;top:575px;color:#2c2c2c">3/4/2017 3:55:00 PM</div>
<div class="g" style="left:363px;top:575px;color:#2c2c2c">2017-03-18</div>
<div class="g" style="left:451px;top:575px;color:#2c2c2c">B501</div>
<div style="left:183px;top:159px;width:1px;height:433px;background:#e0d2c4"></div>
<div style="left:359px;top:159px;width:1px;height:433px;background:#e0d2c4"></div>
<div style="left:447px;top:159px;width:1px;height:433px;background:#e0d2c4"></div>
<div class="sb" style="left:31px;top:662px;width:503px;height:14px"></div>
<div class="sbb" style="left:31px;top:662px;width:14px;height:14px"><svg style="left:3px;top:2px" width="6" height="8" viewBox="0 0 6 8"><path d="M5 0L1 4l4 4z" fill="#000"/></svg></div>
<div class="sbb" style="left:45px;top:662px;width:14px;height:14px"></div>
<div class="sbb" style="left:520px;top:662px;width:14px;height:14px"><svg style="left:4px;top:2px" width="6" height="8" viewBox="0 0 6 8"><path d="M1 0l4 4-4 4z" fill="#000"/></svg></div>
<div style="left:29px;top:680px;width:176px;height:14px;border-top:1px solid #8c8a86;border-left:1px solid #8c8a86;border-right:1px solid #fff;border-bottom:1px solid #fff;font-size:8px;line-height:11px;padding-left:3px;color:#222">Found 26 Work Orders</div>
<div class="grp" style="left:548px;top:87px;width:843px;height:631px"></div>
<div class="gl" style="left:554px;top:76px;height:22px;line-height:22px;font-size:16.8px;color:#000080">BMS WO Editor:</div>
<div style="left:554px;top:97px;width:520px;height:21px;border-top:1px solid #fff;border-left:1px solid #fff;border-right:1px solid #8c8a86;border-bottom:1px solid #8c8a86"></div>
<div style="left:557px;top:100px;width:2px;height:16px;border-left:1px solid #fff;border-right:1px solid #8c8a86"></div>
<div class="sep" style="left:621px;top:100px;height:16px"></div>
<div class="sep" style="left:685px;top:100px;height:16px"></div>
<div class="sep" style="left:749px;top:100px;height:16px"></div>
<div class="sep" style="left:813px;top:100px;height:16px"></div>
<div class="sep" style="left:877px;top:100px;height:16px"></div>
<div class="sep" style="left:941px;top:100px;height:16px"></div>
<div class="sep" style="left:1005px;top:100px;height:16px"></div>
<div style="left:566px;top:101px;width:16px;height:16px"><svg style="left:1px;top:1px" width="12" height="12" viewBox="0 0 14 14"><path d="M3 4h6a3 3 0 0 1 0 6H6" fill="none" stroke="#0a5a0a" stroke-width="3"/><path d="M3 4h6a3 3 0 0 1 0 6H6" fill="none" stroke="#30d030" stroke-width="1.4"/><path d="M5 0.8L0.8 4 5 7.2z" fill="#30d030" stroke="#0a5a0a" stroke-width="0.8"/><path d="M8 7.5l-3 2.5 3 2.5z" fill="#30d030" stroke="#0a5a0a" stroke-width="0.8"/></svg></div>
<div class="tah" style="left:581px;top:101px;font-size:10.5px;line-height:14px;color:#000;transform-origin:0 50%;transform:scaleX(0.97)">Refresh</div>
<div style="left:630px;top:101px;width:16px;height:16px"><svg width="14" height="14" viewBox="0 0 14 14"><path d="M4.5 2.5h4l2 2v7h-6z" fill="#60e0e0" stroke="#111" stroke-width="1"/><path d="M1 1v12M13 1v12M3 0.5h1M10 0.5h1" stroke="#333" stroke-width="1" stroke-dasharray="1 2"/></svg></div>
<div class="tah" style="left:662.5px;top:101px;font-size:10.5px;line-height:14px;color:#000;transform-origin:0 50%;transform:scaleX(0.93)">Add</div>
<div style="left:694px;top:101px;width:16px;height:16px"><svg width="14" height="14" viewBox="0 0 14 14"><rect x="0.5" y="0.5" width="6" height="5" fill="#3060d0" stroke="#111"/><rect x="2" y="2" width="3" height="1.5" fill="#fff"/><path d="M8 3h3v4m-2-1.5l2 2 2-2" fill="none" stroke="#111" stroke-width="1.2"/><rect x="4.5" y="9.5" width="8" height="4" fill="#fff" stroke="#111"/><path d="M6 11.5h5" stroke="#c02020" stroke-width="1"/></svg></div>
<div class="tah" style="left:712.5px;top:101px;font-size:10.5px;line-height:14px;color:#000;transform-origin:0 50%;transform:scaleX(0.88)">Update</div>
<div style="left:757px;top:100px;width:16px;height:16px"><svg style="left:1px;top:1px" width="13" height="13" viewBox="0 0 14 16" preserveAspectRatio="none"><rect x="0" y="0" width="14" height="16" fill="#8c8a88"/><path d="M3.5 4v10" stroke="#e8e8e8" stroke-width="1"/><path d="M0 0.5h14" stroke="#b0aeac"/></svg></div>
<div class="tah" style="left:779px;top:101px;font-size:10.5px;line-height:14px;color:#9a9894;text-shadow:1px 1px 0 #fff;transform-origin:0 50%;transform:scaleX(0.88)">Delete</div>
<div style="left:821px;top:101px;width:16px;height:16px"><svg width="15" height="14" viewBox="0 0 15 14"><path d="M1 8.5c1.5 0.5 2.5 2 3 4.5C7 7 10 3 14.5 0.5 10 2 6.5 5.5 4.5 9 4 8 3 7.2 1 8.5z" fill="#d01818" stroke="#b00808" stroke-width="1.5" stroke-linejoin="round"/></svg></div>
<div class="tah" style="left:840px;top:101px;font-size:10.5px;line-height:14px;color:#000;transform-origin:0 50%;transform:scaleX(0.88)">Comply</div>
<div style="left:885px;top:101px;width:16px;height:16px"><svg width="14" height="14" viewBox="0 0 14 14"><rect x="2.5" y="1.5" width="11" height="11" fill="#fff" stroke="#1030a0" stroke-width="1"/><rect x="2.5" y="1.5" width="11" height="3" fill="#2040c0"/><path d="M9 6h3M9 8h3M9 10h3" stroke="#1030a0" stroke-width="1"/><path d="M0 8h5m-2-2.5l2.500 2.500-2.500 2.500" stroke="#1030a0" stroke-width="1.5" fill="none"/></svg></div>
<div class="tah" style="left:904px;top:101px;font-size:10.5px;line-height:14px;color:#000;transform-origin:0 50%;transform:scaleX(0.88)">Set INT</div>
<div style="left:949px;top:101px;width:16px;height:16px"><svg width="16" height="14" viewBox="0 0 16 14"><path d="M0.500 1.500l6-1 8.500 5v3l-8-3.500-6.500 0.500z" fill="#e0a860" stroke="#b08040" stroke-width="0.8"/><path d="M1 6l8 0.500 6 4.500-1.500 2.500-9-2.500-3.500-2z" fill="#98a848" stroke="#687828" stroke-width="0.8"/><path d="M3 8.500l9 3M3 4l9 4" stroke="#d0c878" stroke-width="1"/></svg></div>
<div class="tah" style="left:986px;top:101px;font-size:10.5px;line-height:14px;color:#000;transform-origin:0 50%;transform:scaleX(0.88)">PO</div>
<div class="lbl" style="left:1119.5px;top:92px;">Group:</div>
<div class="star" style="left:1164.2px;top:93.4px">*</div>
<div class="cmb" style="left:1076px;top:108px;width:141.5px;height:22px;padding-left:0.3px">Base<div class="dd" style="right:0;top:0;width:13px;height:18px"><i></i></div></div>
<div class="fld c" style="left:1221px;top:103px;width:157px;height:31px;font-size:20px;line-height:27px;color:#0000b0">WS0001.08.20</div>
<div class="lbl" style="left:581px;top:137px;">WO Date:</div>
<div class="star" style="left:659.95px;top:138.4px">*</div>
<div class="lav" style="left:674px;top:130px;width:44px;height:24px"></div>
<svg style="left:689.0px;top:135.0px" width="14" height="14" viewBox="0 0 14 14"><rect x="0" y="0" width="14" height="14" fill="#fff"/><rect x="0" y="0" width="14" height="3" fill="#101080"/><path d="M0 5.500h14M0 8.500h14M0 11.500h14M2.500 3v11M5.500 3v11M8.500 3v11M11.500 3v11" stroke="#803030" stroke-width="1"/><rect x="0.5" y="0.5" width="13" height="13" fill="none" stroke="#403040" stroke-width="1"/></svg>
<div class="fld c" style="left:562px;top:153px;width:113px;height:25px;padding-left:0px;font-size:14px;line-height:18px;">27.08.20</div>
<div class="fld c" style="left:674px;top:153px;width:72px;height:25px;padding-left:0px;font-size:14px;line-height:18px;">17:25</div>
<div class="lbl" style="left:896px;top:137px;">Customer:</div>
<div class="star" style="left:968.7px;top:138.4px">*</div>
<div class="cmb" style="left:751px;top:153px;width:365.5px;height:22px;padding-left:0.3px">TEST NG<div class="dd" style="right:0;top:0;width:13px;height:18px"><i></i></div></div>
<div class="lbl" style="left:1166.6px;top:137px;">Customer Order Reference:</div>
<div class="star" style="left:1361.8px;top:138.4px">*</div>
<div class="fld c" style="left:1123px;top:153px;width:255px;height:25px;padding-left:0px;font-size:14px;line-height:18px;">TEST NG</div>
<div class="lbl" style="left:655.7px;top:181.5px;">PN:</div>
<div class="star" style="left:701.95px;top:183.4px">*</div>
<div class="fld" style="left:751px;top:178px;width:154px;height:22px;padding-left:2px;font-size:14px;"></div>
<div class="cmb" style="left:562px;top:197.5px;width:224.5px;height:22.5px;padding-left:0.3px">000021XX<div class="dd" style="right:0;top:0;width:13px;height:18.5px"><i></i></div></div>
<div class="fld c" style="left:796px;top:197.5px;width:253.5px;height:24.5px;padding-left:0px;font-size:14px;line-height:18px;">ertewttew</div>
<div class="lbl" style="left:912px;top:181.5px;">SN:</div>
<div class="star" style="left:954.2px;top:183.4px">*</div>
<div class="lbl" style="left:1080px;top:181.5px;">A/C Type:</div>
<div class="cmb" style="left:1053px;top:197.5px;width:125.5px;height:22.5px;padding-left:0.3px"><div class="dd" style="right:0;top:0;width:13px;height:18.5px"><i></i></div></div>
<div class="lbl" style="left:736px;top:226px;">Description:</div>
<div class="star" style="left:842.2px;top:227.4px">*</div>
<div class="fld" style="left:562px;top:241px;width:422.5px;height:26px;padding-left:1.3px;font-size:14px;line-height:20px;">LIFEJACKET TYPE 102 Mk. 2BA</div>
<div class="lbl" style="left:1037.5px;top:226px;">Contract Type:</div>
<div class="star" style="left:1150.7px;top:227.4px">*</div>
<div class="cmb" style="left:989.5px;top:242px;width:184.0px;height:22px;padding-left:0.3px">NA<div class="dd" style="right:0;top:0;width:13px;height:18px"><i></i></div></div>
<div class="lbl" style="left:1195px;top:226px;">A/C Reg:</div>
<div class="star" style="left:1263.8px;top:227.4px">*</div>
<div class="cmb" style="left:1179px;top:242px;width:99.90000000000009px;height:22px;padding-left:0.3px">LY-STG<div class="dd" style="right:0;top:0;width:13px;height:18px"><i></i></div></div>
<div class="lbl" style="left:1295.6px;top:226px;">Treatment:</div>
<div class="star" style="left:1372.6000000000001px;top:227.4px">*</div>
<div class="cmb" style="left:1291.4px;top:242px;width:85.69999999999982px;height:22px;padding-left:0.3px">BTS<div class="dd" style="right:0;top:0;width:13px;height:18px"><i></i></div></div>
<div class="grp" style="left:562px;top:285px;width:323px;height:75px"></div>
<div class="gl" style="left:568.5px;top:275.3px;height:18px;line-height:18px;font-size:14px;color:#000;letter-spacing:0px">Time:</div>
<div style="left:584px;top:298px;font-size:13px;line-height:16px;color:#555">TSO :</div>
<div style="left:737.5px;top:298px;font-size:13px;line-height:16px;color:#555">TSN :</div>
<div style="left:582.5px;top:329px;font-size:13px;line-height:16px;color:#555">CSO :</div>
<div style="left:741px;top:329px;font-size:13px;line-height:16px;color:#555">CSN :</div>
<div class="fld c" style="left:632px;top:297px;width:86px;height:25.5px;padding-left:0px;font-size:14px;line-height:19px;">NA</div>
<div class="fld c" style="left:786px;top:297px;width:86px;height:25.5px;padding-left:0px;font-size:14px;line-height:19px;">NA</div>
<div class="fld c" style="left:632px;top:328.75px;width:86px;height:25.0px;padding-left:0px;font-size:14px;line-height:19px;">NA</div>
<div class="fld c" style="left:786px;top:328.75px;width:86px;height:25.0px;padding-left:0px;font-size:14px;line-height:19px;">NA</div>
<div class="grp" style="left:886px;top:285px;width:490px;height:75px"></div>
<div class="gl" style="left:891px;top:276px;height:18px;line-height:18px;font-size:14px;color:#000;letter-spacing:0px">Reason for Removal:</div>
<div style="left:1077px;top:280px;width:20px;height:10px;background:#d6d3ce"></div>
<div class="star" style="left:1081.2px;top:280.4px">*</div>
<div class="ta" style="left:898.75px;top:297.5px;width:450.75px;height:58.0px;color:#0000a8;font-weight:bold;font-size:14px;line-height:18px;padding-left:1px">tettewtew</div>
<div class="sb" style="left:1349.5px;top:297.5px;width:14px;height:58.0px"></div>
<div class="sbb" style="left:1349.5px;top:297.5px;width:14px;height:13px"><svg style="left:3px;top:3px" width="7" height="5" viewBox="0 0 7 5"><path d="M0 4.500L3.500 0.500 7 4.500z" fill="#8c8a86"/></svg></div>
<div class="sbb" style="left:1349.5px;top:342.5px;width:14px;height:13px"><svg style="left:3px;top:4px" width="7" height="5" viewBox="0 0 7 5"><path d="M0 0.500L3.500 4.500 7 0.500z" fill="#8c8a86"/></svg></div>
<div class="grp" style="left:562px;top:370px;width:688px;height:74px"></div>
<div class="gl" style="left:568.5px;top:361px;height:18px;line-height:18px;font-size:14px;color:#000;letter-spacing:0px">Requested Work:</div>
<div style="left:726px;top:365px;width:20px;height:10px;background:#d6d3ce"></div>
<div class="star" style="left:730.7px;top:365.4px">*</div>
<div class="ta" style="left:576px;top:382.4px;width:647px;height:58.200000000000045px;color:#0000a8;font-weight:bold;font-size:14px;line-height:18px;padding-left:1px">tewtwetewt</div>
<div class="sb" style="left:1223px;top:382.4px;width:14px;height:58.200000000000045px"></div>
<div class="sbb" style="left:1223px;top:382.4px;width:14px;height:13px"><svg style="left:3px;top:3px" width="7" height="5" viewBox="0 0 7 5"><path d="M0 4.500L3.500 0.500 7 4.500z" fill="#8c8a86"/></svg></div>
<div class="sbb" style="left:1223px;top:427.6px;width:14px;height:13px"><svg style="left:3px;top:4px" width="7" height="5" viewBox="0 0 7 5"><path d="M0 0.500L3.500 4.500 7 0.500z" fill="#8c8a86"/></svg></div>
<div class="chk" style="left:1264px;top:369.10px"></div>
<div style="left:1280.6px;top:366.60px;font-size:12.15px;line-height:16px;color:#2c2c2c">Received</div>
<div class="chk" style="left:1264px;top:386.65px"></div>
<div style="left:1280.6px;top:384.15px;font-size:12.15px;line-height:16px;color:#2c2c2c">Disassembly</div>
<div class="chk" style="left:1264px;top:404.20px"></div>
<div style="left:1280.6px;top:401.70px;font-size:12.15px;line-height:16px;color:#2c2c2c">Cleaning</div>
<div class="chk" style="left:1264px;top:421.75px"></div>
<div style="left:1280.6px;top:419.25px;font-size:12.15px;line-height:16px;color:#2c2c2c">Paint Removal</div>
<div class="chk" style="left:1264px;top:439.30px"></div>
<div style="left:1280.6px;top:436.80px;font-size:12.15px;line-height:16px;color:#2c2c2c">Inspection</div>
<div class="chk" style="left:1264px;top:456.85px"></div>
<div style="left:1280.6px;top:454.35px;font-size:12.15px;line-height:16px;color:#2c2c2c">NDT</div>
<div class="chk" style="left:1264px;top:474.40px"></div>
<div style="left:1280.6px;top:471.90px;font-size:12.15px;line-height:16px;color:#2c2c2c">Repair</div>
<div class="chk" style="left:1264px;top:491.95px"></div>
<div style="left:1280.6px;top:489.45px;font-size:12.15px;line-height:16px;color:#2c2c2c">Painting</div>
<div class="chk" style="left:1264px;top:509.50px"></div>
<div style="left:1280.6px;top:507.00px;font-size:12.15px;line-height:16px;color:#2c2c2c">Assembly</div>
<div style="left:569.5px;top:444px;font-size:14px;font-weight:bold;line-height:17px;color:#000">Note:</div>
<div class="ta" style="left:562px;top:459px;width:675px;height:46.5px;color:#0000a8;font-weight:bold;font-size:14px;line-height:18px;padding-left:1px"></div>
<div class="sb" style="left:1237px;top:459px;width:14px;height:46.5px"></div>
<div class="sbb" style="left:1237px;top:459px;width:14px;height:13px"><svg style="left:3px;top:3px" width="7" height="5" viewBox="0 0 7 5"><path d="M0 4.500L3.500 0.500 7 4.500z" fill="#8c8a86"/></svg></div>
<div class="sbb" style="left:1237px;top:492.5px;width:14px;height:13px"><svg style="left:3px;top:4px" width="7" height="5" viewBox="0 0 7 5"><path d="M0 0.500L3.500 4.500 7 0.500z" fill="#8c8a86"/></svg></div>
<div style="left:562px;top:458px;width:689px;height:2px;background:#7a7a7a"></div>
<div class="chk" style="left:562px;top:515px;width:12px;height:12px;border-width:1px;box-shadow:inset 1px 1px 0 #5a5a5a"></div>
<div style="left:578.75px;top:510.5px;font-size:14px;font-weight:bold;line-height:20px;color:#000">Strip Down</div>
<div class="chk" style="left:688px;top:515px;width:12px;height:12px;border-width:1px;box-shadow:inset 1px 1px 0 #5a5a5a"></div>
<div style="left:705px;top:510.5px;font-size:14px;font-weight:bold;line-height:20px;color:#a00000">On Hold</div>
<div class="chk" style="left:562px;top:540.5px;width:12px;height:12px;border-width:1px;box-shadow:inset 1px 1px 0 #5a5a5a"></div>
<div style="left:580.5px;top:536.0px;font-size:18px;font-weight:bold;line-height:20px;color:#900000">AOG</div>
<div class="chk" style="left:641.75px;top:540.5px;width:12px;height:12px;border-width:1px;box-shadow:inset 1px 1px 0 #5a5a5a"></div>
<div style="left:658.25px;top:536.0px;font-size:14px;font-weight:bold;line-height:20px;color:#800000">Urgent</div>
<div class="chk" style="left:725.75px;top:540.5px;width:12px;height:12px;border-width:1px;box-shadow:inset 1px 1px 0 #5a5a5a"></div>
<div style="left:742.5px;top:536.0px;font-size:14px;font-weight:bold;line-height:20px;color:#000">Routine</div>
<div class="lbl" style="left:818.75px;top:513.25px;">DeadLine:</div>
<div class="star" style="left:894.45px;top:514.4px">*</div>
<div class="fld c" style="left:820.75px;top:529.25px;width:128.5px;height:24.75px;padding-left:0px;font-size:14px;line-height:16px;">27.08.20</div>
<div class="lav" style="left:913.25px;top:507.5px;width:36.75px;height:23.0px"></div>
<svg style="left:924.625px;top:512.0px" width="14" height="14" viewBox="0 0 14 14"><rect x="0" y="0" width="14" height="14" fill="#fff"/><rect x="0" y="0" width="14" height="3" fill="#101080"/><path d="M0 5.500h14M0 8.500h14M0 11.500h14M2.500 3v11M5.500 3v11M8.500 3v11M11.500 3v11" stroke="#803030" stroke-width="1"/><rect x="0.5" y="0.5" width="13" height="13" fill="none" stroke="#403040" stroke-width="1"/></svg>
<div class="lbl" style="left:955px;top:513.25px;">Originator:</div>
<div class="star" style="left:1036.2px;top:514.4px">*</div>
<div class="cmb" style="left:952.5px;top:529.25px;width:70.0px;height:22.0px;padding-left:0.3px">001<div class="dd" style="right:0;top:0;width:13px;height:18.0px"><i></i></div></div>
<div style="left:1025px;top:529px;width:353px;height:25px;background:#e8e4e8;border:1px solid #000"></div>
<div class="lbl" style="left:1188px;top:513.25px;">Name:</div>
<div style="left:547px;top:560px;width:4px;height:7px;background:#d6d3ce"></div>
<div class="grp" style="left:548px;top:567.5px;width:393px;height:150.0px"></div>
<div class="gl" style="left:554.25px;top:558.5px;height:18px;line-height:18px;font-size:12.8px;color:#00005a;letter-spacing:0px">Spare Parts Required for Treatment:</div>
<div class="grp" style="left:942px;top:567.5px;width:434px;height:150.0px"></div>
<div class="gl" style="left:946.75px;top:558.5px;height:18px;line-height:18px;font-size:12.8px;color:#00005a;letter-spacing:0px">CMM Manual Information:</div>
<div style="left:563.25px;top:582.5px;width:363.5px;height:124.0px;background:#858385;border-top:1px solid #5a585a;border-left:1px solid #5a585a;border-right:1px solid #fff;border-bottom:1px solid #fff"></div>
<div class="hdr" style="left:564.25px;top:584.0px;width:234.0px;height:16.5px;padding-left:2.5px;font-size:12.25px">No Spare PN were Found !</div>
<div style="left:955.75px;top:582.5px;width:405.75px;height:124.0px;background:#858385;border-top:1px solid #5a585a;border-left:1px solid #5a585a;border-right:1px solid #fff;border-bottom:1px solid #fff"></div>
<div class="hdr" style="left:956.75px;top:584.0px;width:234.5px;height:16.5px;padding-left:2.5px;font-size:12.25px">No Manuals were Found !</div>
<div style="left:0;top:719px;width:1399px;height:32px;background:#d6d3ce"></div>
<svg style="left:600px;top:140px" width="170" height="160" viewBox="600 140 170 160"><path d="M625.6 156.5L698.6 272L730 247.500z" fill="#1199ff"/><circle cx="721.8" cy="269.3" r="23" fill="#222"/><circle cx="721.8" cy="269.3" r="22" fill="#fff"/><circle cx="721.8" cy="269.3" r="20.3" fill="#1199ff"/><text x="721.8" y="277.4" text-anchor="middle" font-family="DejaVu Sans,Liberation Sans,sans-serif" font-weight="bold" font-size="22" fill="#fff">5</text></svg>
</div>
</body></html>
